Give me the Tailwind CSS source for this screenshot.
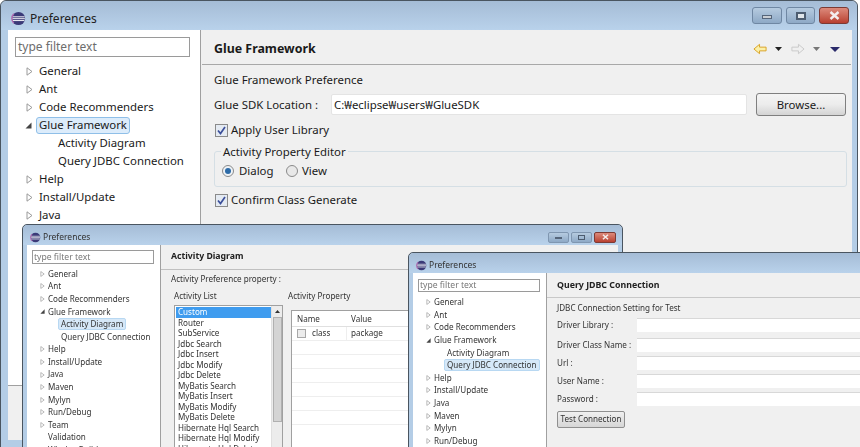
<!DOCTYPE html>
<html lang="en">
<head>
<meta charset="UTF-8">
<title>Preferences</title>
<script src="https://cdn.jsdelivr.net/npm/@tailwindcss/browser@4"></script>
</head>
<body class="relative w-[860px] h-[447px] overflow-hidden bg-white font-['Noto_Sans',sans-serif] text-[11.4px] text-[#1a1a1a]">

<!-- main window -->
<div class="absolute left-0 top-0 w-[858px] h-[460px] flex flex-col rounded-t-[6px] border border-[#4a5560] bg-[#b4cde6]">
  <div class="h-[29px] shrink-0 flex items-center pl-[10px] pr-[8px] pt-[6px] rounded-t-[6px] bg-gradient-to-b from-[#a5bcd6] to-[#b9d2eb]">
    <svg class="w-[15px] h-[15px] mr-[4px]" viewBox="0 0 16 16"><circle cx="8" cy="8" r="7" fill="#3b3a78"/><path d="M1.5 6.2h13M1.2 8.2h13.6M1.8 10.2h12.4" stroke="#fff" stroke-width="1"/><path d="M3 3a7 7 0 0 0 0 10" stroke="#b06ab0" stroke-width="1.5" fill="none"/></svg>
    <span class="text-[12px] text-[#222]">Preferences</span>
    <div class="ml-auto flex gap-[4px] mt-[-6px]">
      <div class="w-[30px] h-[17px] rounded-[3px] border border-[#6f87a3] bg-gradient-to-b from-[#b6cbe0] to-[#8ea9c6] flex items-center justify-center"><div class="w-[10px] h-[4px] mt-[3px] bg-[#c9ced4] border border-[#55657a]"></div></div>
      <div class="w-[29px] h-[17px] rounded-[3px] border border-[#6f87a3] bg-gradient-to-b from-[#b6cbe0] to-[#8ea9c6] flex items-center justify-center"><div class="w-[10px] h-[8px] bg-[#dfe5ea] border-2 border-[#4c5c70]"></div></div>
      <div class="w-[30px] h-[17px] rounded-[3px] border border-[#7c3a34] bg-gradient-to-b from-[#dc8a7c] to-[#b83f30] flex items-center justify-center"><svg class="w-[11px] h-[9px]" viewBox="0 0 11 9"><path d="M1.5 1l8 7M9.5 1l-8 7" stroke="#f4eeee" stroke-width="2.4"/></svg></div>
    </div>
  </div>
  <div class="h-[410px] shrink-0 flex ml-[7px] mr-[5px] bg-[#f0f0f0]">
    <div class="w-[193px] shrink-0 bg-white border-r border-[#a0a0a0] border-b h-[356px] pl-[7px]">
      <div class="mt-[7px] w-[175px] h-[20px] border border-[#9a9a9a] flex items-center pl-[2px] text-[#6d6d6d] text-[12px]">type filter text</div>
      <div class="mt-[5px]">
        <div class="h-[18px] flex items-center pl-[11px]"><svg class="w-[7px] h-[9px] mr-[6px]" viewBox="0 0 7 9"><path d="M1 .8l5 3.7-5 3.7z" fill="#fff" stroke="#9a9a9a"/></svg>General</div>
        <div class="h-[18px] flex items-center pl-[11px]"><svg class="w-[7px] h-[9px] mr-[6px]" viewBox="0 0 7 9"><path d="M1 .8l5 3.7-5 3.7z" fill="#fff" stroke="#9a9a9a"/></svg>Ant</div>
        <div class="h-[18px] flex items-center pl-[11px]"><svg class="w-[7px] h-[9px] mr-[6px]" viewBox="0 0 7 9"><path d="M1 .8l5 3.7-5 3.7z" fill="#fff" stroke="#9a9a9a"/></svg>Code Recommenders</div>
        <div class="h-[18px] flex items-center pl-[10px]"><svg class="w-[7px] h-[7px] mr-[4px]" viewBox="0 0 7 7"><path d="M6.5.5v6h-6z" fill="#444"/></svg><span class="px-[2px] h-[17px] flex items-center rounded-[3px] border border-[#8fbfe8] bg-[#dcecfb]">Glue Framework</span></div>
        <div class="h-[18px] flex items-center pl-[43px]">Activity Diagram</div>
        <div class="h-[18px] flex items-center pl-[43px]">Query JDBC Connection</div>
        <div class="h-[18px] flex items-center pl-[11px]"><svg class="w-[7px] h-[9px] mr-[6px]" viewBox="0 0 7 9"><path d="M1 .8l5 3.7-5 3.7z" fill="#fff" stroke="#9a9a9a"/></svg>Help</div>
        <div class="h-[18px] flex items-center pl-[11px]"><svg class="w-[7px] h-[9px] mr-[6px]" viewBox="0 0 7 9"><path d="M1 .8l5 3.7-5 3.7z" fill="#fff" stroke="#9a9a9a"/></svg>Install/Update</div>
        <div class="h-[18px] flex items-center pl-[11px]"><svg class="w-[7px] h-[9px] mr-[6px]" viewBox="0 0 7 9"><path d="M1 .8l5 3.7-5 3.7z" fill="#fff" stroke="#9a9a9a"/></svg>Java</div>
      </div>
    </div>
    <div class="flex-1 bg-[#f0f0f0] flex flex-col min-w-0">
      <div class="h-[35px] shrink-0 flex items-center pl-[12px] pr-[11px] border-b border-[#a8a8a8] mx-[1px]">
        <span class="font-bold text-[12.4px] mt-[4px]">Glue Framework</span>
        <div class="ml-auto flex items-center mt-[4px]">
          <svg class="w-[14px] h-[12px]" viewBox="0 0 15 12"><path d="M1 6l6-5v3h7v4H7v3z" fill="#fbf0a8" stroke="#d8a020"/></svg>
          <svg class="w-[7px] h-[4px] ml-[8px]" viewBox="0 0 7 4"><path d="M0 0h7L3.5 4z" fill="#222"/></svg>
          <svg class="w-[14px] h-[12px] ml-[9px]" viewBox="0 0 15 12"><path d="M14 6L8 1v3H1v4h7v3z" fill="#f0f0f0" stroke="#c8c8c8"/></svg>
          <svg class="w-[7px] h-[4px] ml-[8px]" viewBox="0 0 7 4"><path d="M0 0h7L3.5 4z" fill="#777"/></svg>
          <svg class="w-[10px] h-[5px] ml-[10px]" viewBox="0 0 10 5"><path d="M0 0h10L5 5z" fill="#2a2a6a"/></svg>
        </div>
      </div>
      <div class="pl-[13px] pr-[5px]">
        <div class="h-[18px] mt-[6px] flex items-center">Glue Framework Preference</div>
        <div class="h-[23px] mt-[4px] flex items-center">
          <span class="w-[117px] shrink-0">Glue SDK Location :</span>
          <div class="w-[416px] h-[21px] bg-white border border-[#e4e4e4] rounded-[2px] pl-[2px] flex items-center">C:₩eclipse₩users₩GlueSDK</div>
          <div class="w-[90px] h-[23px] ml-[9px] rounded-[3px] border border-[#7f7f7f] bg-gradient-to-b from-[#f4f4f4] via-[#ececec] to-[#d4d4d4] flex items-center justify-center">Browse...</div>
        </div>
        <div class="h-[18px] mt-[5px] flex items-center">
          <span class="w-[13px] h-[13px] ml-[1px] mr-[3px] border border-[#8a8a8a] bg-[#e4eaf2] flex items-center justify-center"><svg class="w-[9px] h-[9px]" viewBox="0 0 9 9"><path d="M1 4.5l2.5 3L8 1" fill="none" stroke="#3b4f9a" stroke-width="1.7"/></svg></span>
          Apply User Library
        </div>
        <div class="relative h-[36px] mt-[12px] border border-[#d5dfe5] rounded-[3px] flex items-center pl-[7px] pt-[3px]">
          <span class="absolute left-[6px] top-[-9px] bg-[#f0f0f0] px-[2px] h-[17px] flex items-center">Activity Property Editor</span>
          <span class="w-[12px] h-[12px] rounded-full border border-[#8a8a8a] bg-[#eef2f6] flex items-center justify-center mr-[5px]"><span class="w-[6px] h-[6px] rounded-full bg-[#2d6ba8]"></span></span>
          <span class="w-[47px]">Dialog</span>
          <span class="w-[12px] h-[12px] rounded-full border border-[#8a8a8a] bg-[#e8e8e8] mr-[4px]"></span>
          <span>View</span>
        </div>
        <div class="h-[18px] mt-[4px] flex items-center">
          <span class="w-[13px] h-[13px] ml-[1px] mr-[3px] border border-[#8a8a8a] bg-[#e4eaf2] flex items-center justify-center"><svg class="w-[9px] h-[9px]" viewBox="0 0 9 9"><path d="M1 4.5l2.5 3L8 1" fill="none" stroke="#3b4f9a" stroke-width="1.7"/></svg></span>
          Confirm Class Generate
        </div>
      </div>
    </div>
  </div>
</div>

<!-- activity diagram window -->
<div class="absolute left-[22px] top-[224px] w-[601px] h-[240px] flex flex-col rounded-t-[5px] border border-[#4a5560] bg-[#b4cde6] text-[8.1px] text-[#333] blur-[0.3px]">
  <div class="h-[20px] shrink-0 flex items-center pl-[7px] pr-[6px] pt-[4px] rounded-t-[5px] bg-gradient-to-b from-[#a5bcd6] to-[#b9d2eb]">
    <svg class="w-[11px] h-[11px] mr-[2px]" viewBox="0 0 16 16"><circle cx="8" cy="8" r="7" fill="#3b3a78"/><path d="M1.5 6.2h13M1.2 8.2h13.6M1.8 10.2h12.4" stroke="#fff" stroke-width="1"/><path d="M3 3a7 7 0 0 0 0 10" stroke="#b06ab0" stroke-width="1.5" fill="none"/></svg>
    <span class="text-[8.5px]">Preferences</span>
    <div class="ml-auto flex gap-[2px]">
      <div class="w-[21px] h-[11px] rounded-[2px] border border-[#7f96b0] bg-gradient-to-b from-[#b6cbe0] to-[#8ea9c6] flex items-center justify-center"><div class="w-[7px] h-[2px] mt-[2px] bg-[#55657a]"></div></div>
      <div class="w-[21px] h-[11px] rounded-[2px] border border-[#7f96b0] bg-gradient-to-b from-[#b6cbe0] to-[#8ea9c6] flex items-center justify-center"><div class="w-[7px] h-[5px] border border-[#4c5c70]"></div></div>
      <div class="w-[22px] h-[11px] rounded-[2px] border border-[#7c3a34] bg-gradient-to-b from-[#dc8a7c] to-[#b83f30] flex items-center justify-center"><svg class="w-[7px] h-[6px]" viewBox="0 0 11 9"><path d="M1.5 1l8 7M9.5 1l-8 7" stroke="#f4eeee" stroke-width="2.4"/></svg></div>
    </div>
  </div>
  <div class="flex-1 flex mx-[4px] min-h-0">
    <div class="w-[134px] shrink-0 bg-white border-r border-[#a0a0a0] pl-[5px]">
      <div class="mt-[5px] w-[122px] h-[14px] border border-[#9a9a9a] flex items-center pl-[1px] text-[#777] text-[8.6px]">type filter text</div>
      <div class="mt-[3.5px]">
        <div class="h-[12.6px] flex items-center pl-[8px]"><svg class="w-[5px] h-[6px] mr-[3px]" viewBox="0 0 7 9"><path d="M1 .8l5 3.7-5 3.7z" fill="#fff" stroke="#9a9a9a"/></svg>General</div>
        <div class="h-[12.6px] flex items-center pl-[8px]"><svg class="w-[5px] h-[6px] mr-[3px]" viewBox="0 0 7 9"><path d="M1 .8l5 3.7-5 3.7z" fill="#fff" stroke="#9a9a9a"/></svg>Ant</div>
        <div class="h-[12.6px] flex items-center pl-[8px]"><svg class="w-[5px] h-[6px] mr-[3px]" viewBox="0 0 7 9"><path d="M1 .8l5 3.7-5 3.7z" fill="#fff" stroke="#9a9a9a"/></svg>Code Recommenders</div>
        <div class="h-[12.6px] flex items-center pl-[8px]"><svg class="w-[5px] h-[5px] mr-[3px]" viewBox="0 0 7 7"><path d="M6.5.5v6h-6z" fill="#444"/></svg>Glue Framework</div>
        <div class="h-[12.6px] flex items-center pl-[26px]"><span class="px-[2px] h-[12px] flex items-center rounded-[2px] bg-[#d6e8f8] border border-[#b8d8f2]">Activity Diagram</span></div>
        <div class="h-[12.6px] flex items-center pl-[29px]">Query JDBC Connection</div>
        <div class="h-[12.6px] flex items-center pl-[8px]"><svg class="w-[5px] h-[6px] mr-[3px]" viewBox="0 0 7 9"><path d="M1 .8l5 3.7-5 3.7z" fill="#fff" stroke="#9a9a9a"/></svg>Help</div>
        <div class="h-[12.6px] flex items-center pl-[8px]"><svg class="w-[5px] h-[6px] mr-[3px]" viewBox="0 0 7 9"><path d="M1 .8l5 3.7-5 3.7z" fill="#fff" stroke="#9a9a9a"/></svg>Install/Update</div>
        <div class="h-[12.6px] flex items-center pl-[8px]"><svg class="w-[5px] h-[6px] mr-[3px]" viewBox="0 0 7 9"><path d="M1 .8l5 3.7-5 3.7z" fill="#fff" stroke="#9a9a9a"/></svg>Java</div>
        <div class="h-[12.6px] flex items-center pl-[8px]"><svg class="w-[5px] h-[6px] mr-[3px]" viewBox="0 0 7 9"><path d="M1 .8l5 3.7-5 3.7z" fill="#fff" stroke="#9a9a9a"/></svg>Maven</div>
        <div class="h-[12.6px] flex items-center pl-[8px]"><svg class="w-[5px] h-[6px] mr-[3px]" viewBox="0 0 7 9"><path d="M1 .8l5 3.7-5 3.7z" fill="#fff" stroke="#9a9a9a"/></svg>Mylyn</div>
        <div class="h-[12.6px] flex items-center pl-[8px]"><svg class="w-[5px] h-[6px] mr-[3px]" viewBox="0 0 7 9"><path d="M1 .8l5 3.7-5 3.7z" fill="#fff" stroke="#9a9a9a"/></svg>Run/Debug</div>
        <div class="h-[12.6px] flex items-center pl-[8px]"><svg class="w-[5px] h-[6px] mr-[3px]" viewBox="0 0 7 9"><path d="M1 .8l5 3.7-5 3.7z" fill="#fff" stroke="#9a9a9a"/></svg>Team</div>
        <div class="h-[12.6px] flex items-center pl-[16px]">Validation</div>
        <div class="h-[12.6px] flex items-center pl-[16px]">WindowBuilder</div>
      </div>
    </div>
    <div class="flex-1 bg-[#f0f0f0] min-w-0">
      <div class="h-[25px] flex items-center pl-[10px] border-b border-[#c0c0c0]"><span class="font-bold text-[8.7px] text-[#222]">Activity Diagram</span></div>
      <div class="h-[12px] mt-[3px] pl-[10px] flex items-center">Activity Preference property :</div>
      <div class="flex mt-[5px] pl-[13px]">
        <div class="w-[114px] shrink-0">
          <div class="h-[12px] flex items-center">Activity List</div>
          <div class="mt-[3px] w-[109px] h-[150px] border border-[#a0a0a0] bg-white flex">
            <div class="flex-1 pl-[1px] pt-[1px] leading-[10.5px]">
              <div class="h-[10.5px] pl-[2px] bg-[#3f9cef] text-white">Custom</div>
              <div class="h-[10.5px] pl-[2px]">Router</div>
              <div class="h-[10.5px] pl-[2px]">SubService</div>
              <div class="h-[10.5px] pl-[2px]">Jdbc Search</div>
              <div class="h-[10.5px] pl-[2px]">Jdbc Insert</div>
              <div class="h-[10.5px] pl-[2px]">Jdbc Modify</div>
              <div class="h-[10.5px] pl-[2px]">Jdbc Delete</div>
              <div class="h-[10.5px] pl-[2px]">MyBatis Search</div>
              <div class="h-[10.5px] pl-[2px]">MyBatis Insert</div>
              <div class="h-[10.5px] pl-[2px]">MyBatis Modify</div>
              <div class="h-[10.5px] pl-[2px]">MyBatis Delete</div>
              <div class="h-[10.5px] pl-[2px]">Hibernate Hql Search</div>
              <div class="h-[10.5px] pl-[2px]">Hibernate Hql Modify</div>
              <div class="h-[10.5px] pl-[2px]">Hibernate Hql Delete</div>
            </div>
            <div class="w-[11px] shrink-0 bg-[#ececec] border-l border-[#e0e0e0] flex flex-col items-center">
              <svg class="w-[5px] h-[3px] mt-[4px]" viewBox="0 0 5 3"><path d="M0 3L2.5 0 5 3z" fill="#333"/></svg>
              <div class="w-[9px] h-[105px] mt-[4px] bg-[#d4d4d4] border border-[#b0b0b0]"></div>
            </div>
          </div>
        </div>
        <div class="flex-1 min-w-0">
          <div class="h-[12px] flex items-center">Activity Property</div>
          <div class="mt-[8px] ml-[3px] h-[150px] border border-[#a0a0a0] bg-white">
            <div class="h-[15px] flex items-center border-b border-[#e0e0e0] mt-[1px]"><span class="w-[55px] pl-[5px]">Name</span><span class="pl-[4px]">Value</span></div>
            <div class="h-[14px] flex items-center border-b border-[#eeeeee]"><span class="w-[55px] pl-[5px] flex items-center border-r border-[#eeeeee] h-[14px]"><span class="w-[9px] h-[9px] border border-[#a8a8a8] bg-[#ececec] mr-[6px]"></span>class</span><span class="pl-[4px]">package</span></div>
            <div class="h-[14px] border-b border-[#eeeeee]"></div>
            <div class="h-[14px] border-b border-[#eeeeee]"></div>
            <div class="h-[14px] border-b border-[#eeeeee]"></div>
            <div class="h-[14px] border-b border-[#eeeeee]"></div>
            <div class="h-[14px] border-b border-[#eeeeee]"></div>
            <div class="h-[14px] border-b border-[#eeeeee]"></div>
          </div>
        </div>
      </div>
    </div>
  </div>
</div>

<!-- query jdbc window -->
<div class="absolute left-[408px] top-[252px] w-[470px] h-[220px] flex flex-col rounded-t-[5px] border border-[#4a5560] bg-[#b4cde6] text-[8.1px] text-[#333] blur-[0.3px]">
  <div class="h-[20px] shrink-0 flex items-center pl-[7px] pt-[4px] rounded-t-[5px] bg-gradient-to-b from-[#a5bcd6] to-[#b9d2eb]">
    <svg class="w-[11px] h-[11px] mr-[2px]" viewBox="0 0 16 16"><circle cx="8" cy="8" r="7" fill="#3b3a78"/><path d="M1.5 6.2h13M1.2 8.2h13.6M1.8 10.2h12.4" stroke="#fff" stroke-width="1"/><path d="M3 3a7 7 0 0 0 0 10" stroke="#b06ab0" stroke-width="1.5" fill="none"/></svg>
    <span class="text-[8.5px]">Preferences</span>
  </div>
  <div class="flex-1 flex ml-[4px] min-h-0">
    <div class="w-[134px] shrink-0 bg-white border-r border-[#a0a0a0] pl-[5px]">
      <div class="mt-[6px] w-[122px] h-[13px] border border-[#9a9a9a] flex items-center pl-[1px] text-[#777] text-[8.6px]">type filter text</div>
      <div class="mt-[4px]">
        <div class="h-[12.6px] flex items-center pl-[8px]"><svg class="w-[5px] h-[6px] mr-[3px]" viewBox="0 0 7 9"><path d="M1 .8l5 3.7-5 3.7z" fill="#fff" stroke="#9a9a9a"/></svg>General</div>
        <div class="h-[12.6px] flex items-center pl-[8px]"><svg class="w-[5px] h-[6px] mr-[3px]" viewBox="0 0 7 9"><path d="M1 .8l5 3.7-5 3.7z" fill="#fff" stroke="#9a9a9a"/></svg>Ant</div>
        <div class="h-[12.6px] flex items-center pl-[8px]"><svg class="w-[5px] h-[6px] mr-[3px]" viewBox="0 0 7 9"><path d="M1 .8l5 3.7-5 3.7z" fill="#fff" stroke="#9a9a9a"/></svg>Code Recommenders</div>
        <div class="h-[12.6px] flex items-center pl-[8px]"><svg class="w-[5px] h-[5px] mr-[3px]" viewBox="0 0 7 7"><path d="M6.5.5v6h-6z" fill="#444"/></svg>Glue Framework</div>
        <div class="h-[12.6px] flex items-center pl-[29px]">Activity Diagram</div>
        <div class="h-[12.6px] flex items-center pl-[26px]"><span class="px-[2px] h-[12px] w-[96px] whitespace-nowrap flex items-center rounded-[2px] bg-[#d6e8f8] border border-[#b8d8f2]">Query JDBC Connection</span></div>
        <div class="h-[12.6px] flex items-center pl-[8px]"><svg class="w-[5px] h-[6px] mr-[3px]" viewBox="0 0 7 9"><path d="M1 .8l5 3.7-5 3.7z" fill="#fff" stroke="#9a9a9a"/></svg>Help</div>
        <div class="h-[12.6px] flex items-center pl-[8px]"><svg class="w-[5px] h-[6px] mr-[3px]" viewBox="0 0 7 9"><path d="M1 .8l5 3.7-5 3.7z" fill="#fff" stroke="#9a9a9a"/></svg>Install/Update</div>
        <div class="h-[12.6px] flex items-center pl-[8px]"><svg class="w-[5px] h-[6px] mr-[3px]" viewBox="0 0 7 9"><path d="M1 .8l5 3.7-5 3.7z" fill="#fff" stroke="#9a9a9a"/></svg>Java</div>
        <div class="h-[12.6px] flex items-center pl-[8px]"><svg class="w-[5px] h-[6px] mr-[3px]" viewBox="0 0 7 9"><path d="M1 .8l5 3.7-5 3.7z" fill="#fff" stroke="#9a9a9a"/></svg>Maven</div>
        <div class="h-[12.6px] flex items-center pl-[8px]"><svg class="w-[5px] h-[6px] mr-[3px]" viewBox="0 0 7 9"><path d="M1 .8l5 3.7-5 3.7z" fill="#fff" stroke="#9a9a9a"/></svg>Mylyn</div>
        <div class="h-[12.6px] flex items-center pl-[8px]"><svg class="w-[5px] h-[6px] mr-[3px]" viewBox="0 0 7 9"><path d="M1 .8l5 3.7-5 3.7z" fill="#fff" stroke="#9a9a9a"/></svg>Run/Debug</div>
      </div>
    </div>
    <div class="flex-1 bg-[#f0f0f0] min-w-0">
      <div class="h-[25px] flex items-center pl-[10px] pt-[2px] border-b border-[#c8c8c8]"><span class="font-bold text-[8.8px] text-[#222]">Query JDBC Connection</span></div>
      <div class="h-[12px] mt-[4px] pl-[10px] flex items-center">JDBC Connection Setting for Test</div>
      <div class="pl-[10px] mt-[4px]">
        <div class="h-[14px] flex items-center"><span class="w-[80px] shrink-0">Driver Library :</span><div class="flex-1 h-[14px] bg-white border-t border-[#d8d8d8]"></div></div>
        <div class="h-[14px] mt-[6px] flex items-center"><span class="w-[80px] shrink-0">Driver Class Name :</span><div class="flex-1 h-[14px] bg-white border-t border-[#d8d8d8]"></div></div>
        <div class="h-[14px] mt-[4px] flex items-center"><span class="w-[80px] shrink-0">Url :</span><div class="flex-1 h-[14px] bg-white border-t border-[#d8d8d8]"></div></div>
        <div class="h-[14px] mt-[4px] flex items-center"><span class="w-[80px] shrink-0">User Name :</span><div class="flex-1 h-[14px] bg-white border-t border-[#d8d8d8]"></div></div>
        <div class="h-[14px] mt-[4px] flex items-center"><span class="w-[80px] shrink-0">Password :</span><div class="flex-1 h-[14px] bg-white border-t border-[#d8d8d8]"></div></div>
        <div class="w-[68px] h-[17px] mt-[5px] rounded-[2px] border border-[#8f8f8f] bg-gradient-to-b from-[#f0f0f0] to-[#d6d6d6] flex items-center justify-center">Test Connection</div>
      </div>
    </div>
  </div>
</div>

</body>
</html>
